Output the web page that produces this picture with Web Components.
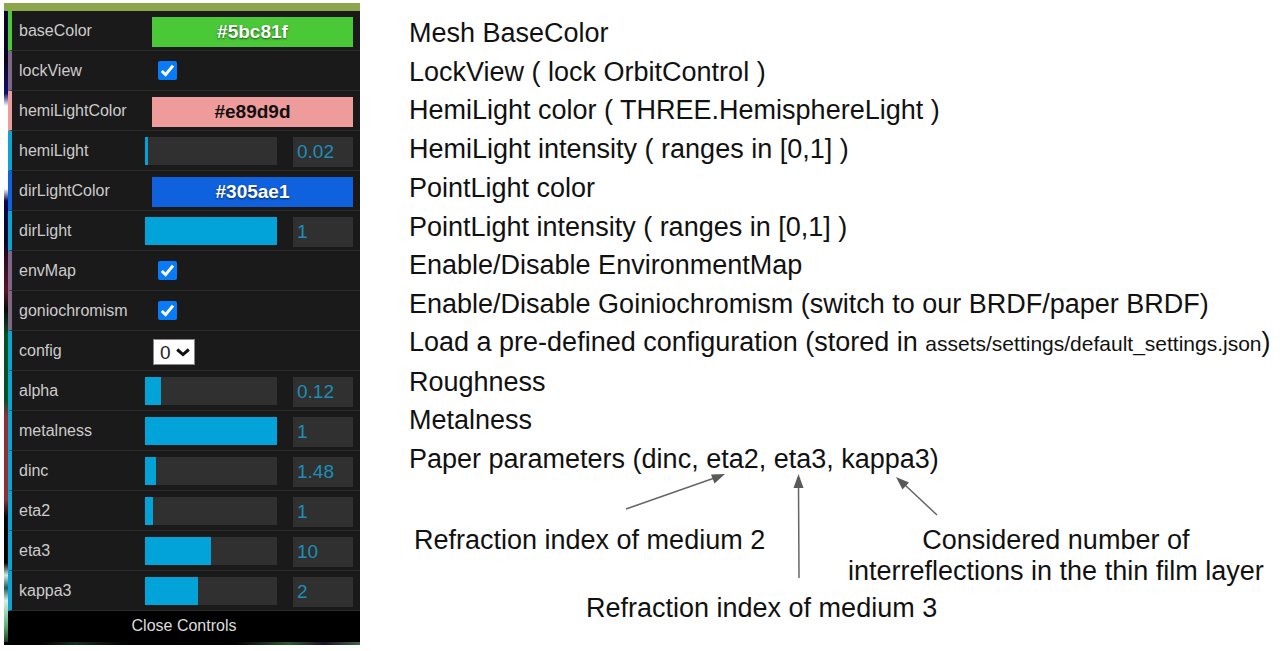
<!DOCTYPE html>
<html lang="en">
<head>
<meta charset="utf-8">
<title>GUI controls guide</title>
<style>
  body { margin: 0; background: #fff; font-family: "Liberation Sans", Arial, sans-serif; }
  small { font-size: 21px; }
</style>
</head>
<body>
<guide-page>
  <control-panel slot="panel">
    <color-row name="baseColor" value="#5bc81f" fill="#4ac837" ink="#fff"></color-row>
    <check-row name="lockView"></check-row>
    <color-row name="hemiLightColor" value="#e89d9d" fill="#ed9b9b" ink="#111"></color-row>
    <slider-row name="hemiLight" value="0.02" percent="2"></slider-row>
    <color-row name="dirLightColor" value="#305ae1" fill="#1061de" ink="#fff"></color-row>
    <slider-row name="dirLight" value="1" percent="100"></slider-row>
    <check-row name="envMap"></check-row>
    <check-row name="goniochromism"></check-row>
    <select-row name="config"></select-row>
    <slider-row name="alpha" value="0.12" percent="12"></slider-row>
    <slider-row name="metalness" value="1" percent="100"></slider-row>
    <slider-row name="dinc" value="1.48" percent="8"></slider-row>
    <slider-row name="eta2" value="1" percent="6"></slider-row>
    <slider-row name="eta3" value="10" percent="50"></slider-row>
    <slider-row name="kappa3" value="2" percent="40"></slider-row>
  </control-panel>
  <note-list slot="notes">
    <p>Mesh BaseColor</p>
    <p>LockView ( lock OrbitControl )</p>
    <p>HemiLight color ( THREE.HemisphereLight )</p>
    <p>HemiLight intensity ( ranges in [0,1] )</p>
    <p>PointLight color</p>
    <p>PointLight intensity ( ranges in [0,1] )</p>
    <p>Enable/Disable EnvironmentMap</p>
    <p>Enable/Disable Goiniochromism (switch to our BRDF/paper BRDF)</p>
    <p>Load a pre-defined configuration (stored in <small>assets/settings/default_settings.json</small>)</p>
    <p>Roughness</p>
    <p>Metalness</p>
    <p>Paper parameters (dinc, eta2, eta3, kappa3)</p>
  </note-list>
  <param-callouts slot="notes"></param-callouts>
</guide-page>

<script>
class Base extends HTMLElement {
  connectedCallback() {
    if (this.shadowRoot) return;
    this.attachShadow({ mode: 'open' }).innerHTML = this.render();
  }
}

customElements.define('guide-page', class extends Base {
  render() {
    return `<style>
      :host { display: flex; align-items: flex-start; padding: 3px 0 0 4px; }
      main { flex: 1; min-width: 0; padding: 11px 0 0 49px; }
    </style>
    <slot name="panel"></slot>
    <main><slot name="notes"></slot></main>`;
  }
});

customElements.define('control-panel', class extends Base {
  render() {
    return `<style>
      :host {
        display: block; flex: 0 0 356px; min-width: 0; box-sizing: border-box;
        padding: 0 0 3px 4px; border-top: 8px solid #8ba64b;
        background:
          linear-gradient(90deg, #000 0 10%, #12301a 20%, #000 35% 65%, #2c5a30 80%, #1c1030 90%, #3c6a40) bottom / 100% 3px no-repeat,
          linear-gradient(#02022c 0, #0a0420 8%, #10106a 13%, #fff 15% 28%, #05054a 30%, #0a0424 36%,
            #5c1528 44%, #0a0a0a 47%, #045022 51% 61%, #8c3034 64% 77%, #000 80% 87%,
            #cfe8e4 89%, #1a5c60 91%, #d8eee8 93%, #5fae78 97%, #102a14);
      }
      button {
        display: block; width: 100%; height: 31px; padding: 0 0 2px; border: 0;
        background: #000; color: #ddd; font: 16px/28px "Liberation Sans", Arial, sans-serif;
      }
    </style>
    <slot></slot>
    <button type="button">Close Controls</button>`;
  }
});

class Row extends Base {
  get accent() { return '#0fa3d1'; }
  render() {
    const name = this.getAttribute('name');
    return `<style>
      :host {
        display: flex; align-items: center; box-sizing: border-box; height: 40px;
        padding: 0 7px; border-left: 4px solid ${this.accent};
        border-bottom: 1px solid #2b2b2b; background: #1a1a1a; color: #ccc;
        font-size: 16px; line-height: 20px;
      }
      label { flex: 0 0 126px; }
      input, select { font-family: "Liberation Sans", Arial, sans-serif; margin: 0; box-sizing: border-box; }
      ${this.css()}
    </style>
    <label for="control">${name}</label>
    ${this.control()}`;
  }
}

customElements.define('color-row', class extends Row {
  get accent() { return this.getAttribute('fill'); }
  css() {
    const ink = this.getAttribute('ink');
    const shadow = ink === '#fff' ? '0 1px 2px rgba(0,0,0,.6)' : 'none';
    return `input {
      flex: 1; min-width: 0; height: 30px; margin: 2px 0 0 7px; padding: 0; border: 0;
      background: ${this.getAttribute('fill')}; color: ${ink}; text-align: center;
      font-size: 19px; font-weight: bold; text-shadow: ${shadow};
    }`;
  }
  control() { return `<input id="control" type="text" value="${this.getAttribute('value')}">`; }
});

customElements.define('check-row', class extends Row {
  get accent() { return '#806787'; }
  css() {
    return `.box { position: relative; display: block; width: 19px; height: 19px; margin-left: 13px; }
    input { appearance: none; display: block; width: 19px; height: 19px; border-radius: 2px; background: #fff; }
    input:checked { background: #0a7bf8; }
    svg { position: absolute; inset: 0; pointer-events: none; }
    input:not(:checked) + svg { display: none; }`;
  }
  control() {
    return `<span class="box"><input id="control" type="checkbox" checked>
      <svg width="19" height="19" viewBox="0 0 19 19" fill="none" stroke="#fff" stroke-width="3"><path d="M3.8 10 7.6 13.6 15 4.6"/></svg></span>`;
  }
});

customElements.define('select-row', class extends Row {
  css() {
    return `.box { position: relative; margin: 3px 0 0 8px; height: 26px; }
    select {
      appearance: none; display: block; width: 42px; height: 26px; padding: 0 0 0 6px;
      border: 1px solid #888; border-radius: 0; background: #fff; color: #222; font-size: 19px;
    }
    svg { position: absolute; right: 5px; top: 9px; pointer-events: none; }`;
  }
  control() {
    return `<span class="box"><select id="control"><option>0</option><option>1</option><option>2</option></select>
      <svg width="14" height="9" viewBox="0 0 14 9" fill="none" stroke="#111" stroke-width="3"><path d="M1.2 1.5 7 6.6 12.8 1.5"/></svg></span>`;
  }
});

customElements.define('slider-row', class extends Row {
  css() {
    const p = this.getAttribute('percent');
    return `.range {
      appearance: none; flex: 1; min-width: 0; height: 28px; border-radius: 0;
      background: linear-gradient(90deg, #02a3d8 ${p}%, #303030 ${p}%);
    }
    .range::-webkit-slider-thumb { appearance: none; width: 1px; height: 28px; background: transparent; }
    .range::-moz-range-thumb { width: 1px; border: 0; background: transparent; }
    .number {
      flex: 0 0 60px; width: 60px; height: 30px; margin: 2px 0 0 16px; padding: 0 4px; border: 0;
      background: #303030; color: #1b8fb6; font-size: 19px;
    }`;
  }
  control() {
    const name = this.getAttribute('name');
    return `<input id="control" class="range" type="range" min="0" max="100" value="${this.getAttribute('percent')}">
      <input class="number" type="text" aria-label="${name} value" value="${this.getAttribute('value')}">`;
  }
});

customElements.define('note-list', class extends Base {
  render() {
    return `<style>
      :host {
        display: grid; grid-template-rows: repeat(12, 1fr); align-items: center; height: 465px;
        color: #111; font-size: 27px; line-height: 31px; white-space: nowrap;
      }
      ::slotted(p) { margin: 0; }
    </style>
    <slot></slot>`;
  }
});

customElements.define('param-callouts', class extends Base {
  render() {
    return `<style>
      :host {
        position: relative; display: grid; grid-template-columns: 172px 174px 88px max-content;
        grid-template-rows: 68px 31px; padding: 46px 0 0 5px;
        color: #111; font-size: 27px; line-height: 31px; white-space: nowrap;
      }
      p { margin: 0; }
      .second { grid-area: 1 / 1 / 2 / 3; }
      .third { grid-area: 2 / 2 / 3 / 5; }
      .layers { grid-area: 1 / 4 / 2 / 5; text-align: center; }
      svg { position: absolute; left: 0; top: -9px; overflow: visible; }
    </style>
    <svg width="560" height="110" viewBox="0 0 560 110" fill="#595959" stroke="#666" stroke-width="1.5" aria-hidden="true">
      <path d="M217 39 304 8.500M390 108 389.500 15M528 45 496 15"/>
      <g stroke="none">
        <path d="M316 4 302 4.500 305.500 13.500Z"/>
        <path d="M389.500 4 394.500 18H384.500Z"/>
        <path d="M487 7 500 12.500 493.500 19.500Z"/>
      </g>
    </svg>
    <p class="second">Refraction index of medium 2</p>
    <p class="layers">Considered number of<br>interreflections in the thin film layer</p>
    <p class="third">Refraction index of medium 3</p>`;
  }
});
</script>
</body>
</html>
